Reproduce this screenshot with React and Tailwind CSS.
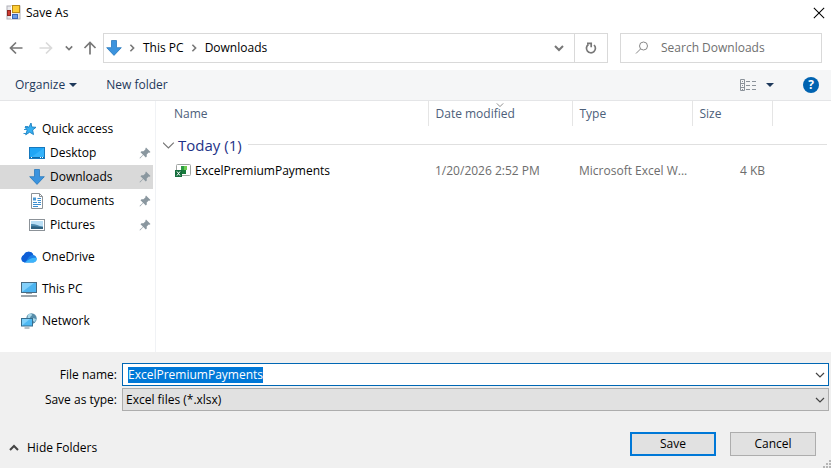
import { useEffect, useRef, useState } from "react";

const DownloadIcon = () => (
  <svg className="w-4 h-4 shrink-0" viewBox="0 0 16 16">
    <path d="M5.500 .5h5v7.200h4.800L8 15.400.7 7.700h4.800z" fill="#3b93de" stroke="#2878bd" strokeWidth=".8" />
  </svg>
);

const StarIcon = () => (
  <svg className="w-4 h-4 shrink-0" viewBox="0 0 16 16">
    <path d="M10 2l.8 4 4.200.3-3.400 2.700.9 4.600-3.800-2.400-4 2.600 1.500-4.800L4 6.300l4-.2z" fill="#36b0f2" stroke="#1a7fc0" strokeWidth=".9" />
    <path d="M4 5.500h3M3 8.500h3M2.500 12.500h3" stroke="#2e93d2" strokeWidth="1" />
  </svg>
);

const DesktopIcon = () => (
  <svg className="w-4 h-4 shrink-0" viewBox="0 0 16 16">
    <rect x=".5" y="2.500" width="15" height="11" fill="#1fa5f5" stroke="#1678bd" />
    <path d="M1 13L15 3v10z" fill="#35b3fb" />
    <path d="M1 12.500h14" stroke="#0f67a5" />
    <path d="M2 12.500h1M11 12.500h1M13 12.500h1" stroke="#fff" />
  </svg>
);

const DocumentIcon = () => (
  <svg className="w-4 h-4 shrink-0" viewBox="0 0 16 16">
    <path d="M2.500 .5h8l3 3v12h-11z" fill="#fff" stroke="#8c9298" />
    <path d="M10.500 .5v3h3" fill="none" stroke="#8c9298" />
    <path d="M8.500 5.500H12M8.500 7.500H12M4 9.500h4M9 9.500h3M4 11.500h8M4 13.500h5" stroke="#3b8ed0" />
    <path d="M4 4.500h3v3H4z" fill="#4a98d4" />
  </svg>
);

const PictureIcon = () => (
  <svg className="w-4 h-4 shrink-0" viewBox="0 0 16 16">
    <rect x=".5" y="2.500" width="15" height="11" fill="#fff" stroke="#8c9298" />
    <rect x="2" y="4" width="12" height="8" fill="#b9def5" />
    <path d="M2 7c4-.5 7 2 12 2.500V12H2z" fill="#4d8bb0" />
    <path d="M2 9.500c4-1 8 .5 12 .5v2H2z" fill="#2f6180" />
  </svg>
);

const CloudIcon = () => (
  <svg className="w-4 h-4 shrink-0" viewBox="0 0 16 16">
    <path d="M4 13.500A4 4 0 0 1 3 5.800 5 5 0 0 1 12.300 6a3.800 3.800 0 0 1 0 7.500z" fill="#1b7fe6" />
    <path d="M3 5.800A5 5 0 0 1 12.300 6C9 6 8 8 6.500 10L4 13.500A4 4 0 0 1 3 5.800z" fill="#0f5fd6" />
    <path d="M4 13.500h8.300a3.800 3.800 0 0 0 3.500-4.500C13 8 8 9 4 13.500z" fill="#3cb4fa" />
  </svg>
);

const ComputerIcon = () => (
  <svg className="w-4 h-4 shrink-0" viewBox="0 0 16 16">
    <rect x=".5" y="1.500" width="15" height="10" fill="#4db4f0" stroke="#476b83" />
    <path d="M1 11L13 2H1z" fill="#83d0fa" />
    <path d="M5 12.500h6" stroke="#a0aab1" />
    <path d="M0 15h16" stroke="#7b868e" strokeWidth="1.500" />
  </svg>
);

const NetworkIcon = () => (
  <svg className="w-4 h-4 shrink-0" viewBox="0 0 16 16">
    <circle cx="10.500" cy="5.500" r="5.200" fill="#578daa" />
    <path d="M7 2c2-2 4-1 4 0s-2 1-2 3-2 1-2.500 0zM12 5l3 1-1 3-2-1z" fill="#a9d8ea" />
    <rect x=".5" y="5.500" width="11" height="7.500" fill="#4eb9f3" stroke="#376d8d" />
    <path d="M1 12.500L9 6H1z" fill="#80d1fb" />
    <path d="M3.500 15h5" stroke="#75838c" />
  </svg>
);

const PinIcon = () => (
  <svg className="w-3 h-3 shrink-0" viewBox="0 0 12 12">
    <path d="M7 .5L11.500 5l-1 .7-.8-.1-2 2 .1 2-1 1L4.300 8 1 11.500l-.5-.5L4 7.700 1.500 5.200l1-1 2 .1 2-2-.1-.9z" fill="#8a979f" />
  </svg>
);

const ExcelIcon = () => (
  <svg className="w-4 h-4 shrink-0" viewBox="0 0 16 16">
    <rect x="1.500" y="1.500" width="14" height="11" rx="1" fill="#fff" stroke="#a0a5a2" />
    <path d="M6 3h3v4H6z" fill="#2d9b45" />
    <path d="M9 3h3v4H9z" fill="#6dcc50" />
    <path d="M6 7h5v4H6z" fill="#187a3c" />
    <rect x="0" y="7" width="7" height="7" fill="#146c3c" />
    <path d="M2 8.500l3 4M5 8.500l-3 4" stroke="#fff" />
  </svg>
);

const FormIcon = () => (
  <svg className="w-4 h-4 shrink-0" viewBox="0 0 16 16">
    <rect x="1" y="1" width="13" height="13" fill="#e9e9ec" stroke="#b0b0b8" />
    <path d="M5.500 1v13" stroke="#fff" />
    <rect x="6.500" y=".5" width="7" height="7" fill="#fccd35" stroke="#b98918" />
    <rect x="1.500" y="5.500" width="3" height="5" fill="#cf3b32" stroke="#8c2721" />
    <rect x="6.500" y="9.500" width="5" height="4" fill="#6b9be6" stroke="#3966b7" />
  </svg>
);

const Chevron = ({ className, d = "M1 3l4 4 4-4", width = 1.2 }) => (
  <svg className={className} viewBox="0 0 10 10" fill="none" stroke="currentColor" strokeWidth={width}>
    <path d={d} />
  </svg>
);

const Arrow = ({ d, className, width = 1.7 }) => (
  <svg className={className} viewBox="0 0 14 14" fill="none" stroke="currentColor" strokeWidth={width}>
    <path d={d} />
  </svg>
);

const quickItems = [
  { label: "Desktop", Icon: DesktopIcon },
  { label: "Downloads", Icon: DownloadIcon },
  { label: "Documents", Icon: DocumentIcon },
  { label: "Pictures", Icon: PictureIcon },
];

const places = [
  { label: "OneDrive", Icon: CloudIcon },
  { label: "This PC", Icon: ComputerIcon },
  { label: "Network", Icon: NetworkIcon },
];

const files = [
  { name: "ExcelPremiumPayments", modified: "1/20/2026 2:52 PM", type: "Microsoft Excel W...", size: "4 KB" },
];

function NavigationBar() {
  return (
    <div className="flex items-center h-[45px] px-[9px] text-[#777]">
      <button type="button" aria-label="Back" className="mr-4">
        <Arrow className="w-3.5 h-3.5" d="M13.500 7H1.500M7 1.500L1.500 7 7 12.500" />
      </button>
      <button type="button" aria-label="Forward" className="mr-3 text-[#dadada]">
        <Arrow className="w-3.5 h-3.5" d="M.5 7h12M7 1.500L12.500 7 7 12.500" />
      </button>
      <button type="button" aria-label="Recent locations" className="mr-2.5">
        <Chevron className="w-2 h-2" width={2} />
      </button>
      <button type="button" aria-label="Up" className="mr-1.5">
        <Arrow className="w-3.5 h-3.5" d="M7 13.500V1.500M1.500 7L7 1.500 12.500 7" />
      </button>
      <div className="flex flex-1 items-center h-[30px] border border-[#d9d9d9]">
        <span className="pl-0.5"><DownloadIcon /></span>
        <Chevron className="w-2 h-2 ml-1.5" d="M3 1l4 4-4 4" width={2} />
        <a href="#this-pc" className="ml-[7px] text-black">This PC</a>
        <Chevron className="w-2 h-2 ml-1.5" d="M3 1l4 4-4 4" width={2} />
        <a href="#downloads" className="ml-[7px] text-black">Downloads</a>
        <button type="button" aria-label="Previous locations" className="ml-auto mr-2.5">
          <Chevron className="w-2.5 h-2.5" width={2} />
        </button>
        <button type="button" aria-label="Refresh" className="flex items-center justify-center w-[33px] h-full border-l border-[#d9d9d9]">
          <svg className="w-3.5 h-3.5" viewBox="0 0 14 14" fill="none" stroke="currentColor" strokeWidth="1.700">
            <path d="M10 4a4.500 4.500 0 1 1-5.500-.5M3 2.300h4.200v4" />
          </svg>
        </button>
      </div>
      <label className="flex items-center w-[202px] h-[30px] ml-3 pl-3.5 border border-[#d9d9d9]">
        <svg className="w-3.5 h-3.5 shrink-0" viewBox="0 0 14 14" fill="none" stroke="#888">
          <circle cx="8.500" cy="5" r="4" />
          <path d="M5.500 8L1 12.500" />
        </svg>
        <input
          type="text"
          aria-label="Search Downloads"
          placeholder="Search Downloads"
          className="min-w-0 flex-1 ml-3 outline-none placeholder:text-[#707070]"
        />
      </label>
    </div>
  );
}

function Toolbar() {
  return (
    <div className="flex items-center h-[31px] pl-[15px] pr-3 bg-[#f5f6f7] border-b border-[#e4e5e7] text-[#1e395b]">
      <button type="button" className="flex items-center gap-1">
        Organize
        <svg className="w-2 h-1" viewBox="0 0 8 4"><path d="M0 0h8L4 4z" fill="currentColor" /></svg>
      </button>
      <button type="button" className="ml-[29px]">New folder</button>
      <button type="button" aria-label="Change your view" className="flex items-center gap-2.5 ml-auto">
        <svg className="w-4 h-3" viewBox="0 0 16 12" fill="none" stroke="#8b929a">
          <path d="M.5 .5h4v11h-4zM.5 4.500h4M.5 8.500h4M2 2.500h1M2 6.500h1M2 10.500h1" />
          <path d="M6 2.500h4M12 2.500h4M6 6.500h4M12 6.500h4M6 10.500h4M12 10.500h4" />
        </svg>
        <svg className="w-2 h-1" viewBox="0 0 8 4"><path d="M0 0h8L4 4z" fill="currentColor" /></svg>
      </button>
      <button
        type="button"
        aria-label="Help"
        className="flex items-center justify-center w-4 h-4 ml-[29px] rounded-full bg-[#0063b1] text-white font-bold"
      >
        ?
      </button>
    </div>
  );
}

function Sidebar() {
  const [selected, setSelected] = useState("Downloads");

  return (
    <nav className="w-[156px] shrink-0 pt-4 pr-0.5 border-r border-[#f0f2f5]">
      <button type="button" className="flex items-center gap-[5px] w-full h-6 pl-[21px]">
        <StarIcon />
        Quick access
      </button>
      {quickItems.map(({ label, Icon }) => (
        <button
          key={label}
          type="button"
          onClick={() => setSelected(label)}
          className={`flex items-center gap-[5px] w-full h-6 pl-[29px] pr-0.5 ${
            selected === label ? "bg-[#d9d9d9]" : ""
          }`}
        >
          <Icon />
          <span className="flex-1 text-left">{label}</span>
          <PinIcon />
        </button>
      ))}
      {places.map(({ label, Icon }) => (
        <button key={label} type="button" className="flex items-center gap-[5px] w-full h-6 mt-2 pl-[21px]">
          <Icon />
          {label}
        </button>
      ))}
    </nav>
  );
}

function FileList() {
  return (
    <div className="flex-1 min-w-0">
      <table className="w-full table-fixed text-left">
        <colgroup>
          <col className="w-[272px]" />
          <col className="w-36" />
          <col className="w-[120px]" />
          <col className="w-20" />
          <col />
        </colgroup>
        <thead>
          <tr className="h-[25px] text-[#4c607a]">
            <th className="pl-[18px] font-normal border-r border-[#e5e5e5]">Name</th>
            <th className="relative pl-[7px] font-normal border-r border-[#e5e5e5]">
              Date modified
              <Chevron className="absolute top-0 left-1/2 -translate-x-1/2 w-2 h-2 text-[#888]" />
            </th>
            <th className="pl-[7px] font-normal border-r border-[#e5e5e5]">Type</th>
            <th className="pl-[7px] font-normal border-r border-[#e5e5e5]">Size</th>
            <td />
          </tr>
        </thead>
        <tbody>
          <tr className="h-[37px]">
            <td colSpan={5} className="pl-[7px] pr-1">
              <button type="button" className="flex items-center w-full text-[15px] text-[#1e3287]">
                <Chevron className="w-3 h-3 mr-[3px] text-[#777]" width={1} d="M0 3l4.500 4.500L9 3" />
                Today (1)
                <span className="flex-1 h-px ml-1.5 bg-[#e0e0e0]" />
              </button>
            </td>
          </tr>
          {files.map((file) => (
            <tr key={file.name} className="h-4 text-[#6d6d6d]">
              <td className="pl-[19px]">
                <span className="flex items-center gap-1 text-black">
                  <ExcelIcon />
                  {file.name}
                </span>
              </td>
              <td className="pl-[7px]">{file.modified}</td>
              <td className="pl-[7px] whitespace-nowrap">{file.type}</td>
              <td className="pr-[7px] text-right">{file.size}</td>
              <td />
            </tr>
          ))}
        </tbody>
      </table>
    </div>
  );
}

export default function App() {
  const nameRef = useRef(null);
  const [fileName, setFileName] = useState("ExcelPremiumPayments");

  useEffect(() => {
    nameRef.current?.focus();
    nameRef.current?.select();
  }, []);

  return (
    <div className="flex flex-col min-h-screen bg-white text-black text-[12px] leading-4 font-['Open_Sans','Noto_Sans',sans-serif]">
      <header className="flex items-center h-[25px] px-1.5">
        <FormIcon />
        <h1 className="ml-1">Save As</h1>
        <button type="button" aria-label="Close" className="ml-auto">
          <Arrow className="w-3 h-3" d="M1 1l12 12M13 1L1 13" width={1.2} />
        </button>
      </header>

      <NavigationBar />
      <Toolbar />

      <main className="flex flex-1">
        <Sidebar />
        <FileList />
      </main>

      <form onSubmit={(e) => e.preventDefault()} className="relative pt-[11px] pb-3 bg-[#f0f0f0]">
        <div className="flex items-center pr-0.5">
          <label htmlFor="file-name" className="w-[122px] pr-[5px] text-right">File name:</label>
          <div className="flex flex-1 items-center h-[23px] pl-[5px] pr-[3px] bg-white border border-[#0067b4]">
            <input
              id="file-name"
              ref={nameRef}
              type="text"
              value={fileName}
              onChange={(e) => setFileName(e.target.value)}
              className="flex-1 min-w-0 h-4 outline-none selection:bg-[#0078d7] selection:text-white"
            />
            <Chevron className="w-2.5 h-2.5 text-[#444]" />
          </div>
        </div>
        <div className="flex items-center mt-0.5 pr-0.5">
          <label htmlFor="file-type" className="w-[122px] pr-[5px] text-right">Save as type:</label>
          <div className="relative flex flex-1 items-center h-[23px] bg-[#e1e1e1] border border-[#adadad]">
            <select id="file-type" className="flex-1 min-w-0 h-full pl-[3px] appearance-none outline-none">
              <option>Excel files (*.xlsx)</option>
            </select>
            <Chevron className="absolute right-[3px] w-2.5 h-2.5 text-[#444] pointer-events-none" />
          </div>
        </div>
        <div className="flex items-end mt-[21px] pl-[9px] pr-[15px]">
          <button type="button" className="flex items-center gap-2">
            <Chevron className="w-2.5 h-2.5 text-[#444]" d="M1 7l4-4 4 4" width={2} />
            Hide Folders
          </button>
          <button type="submit" className="w-[86px] h-6 ml-auto bg-[#e1e1e1] border-2 border-[#0078d7]">Save</button>
          <button type="button" className="w-[86px] h-6 ml-3.5 bg-[#e1e1e1] border border-[#adadad]">Cancel</button>
        </div>
        <svg className="absolute right-0 bottom-0 w-2 h-2" viewBox="0 0 8 8" fill="#b5b5b5">
          <path d="M6 0h2v2H6zM3 3h2v2H3zM6 3h2v2H6zM0 6h2v2H0zM3 6h2v2H3zM6 6h2v2H6z" />
        </svg>
      </form>
    </div>
  );
}
